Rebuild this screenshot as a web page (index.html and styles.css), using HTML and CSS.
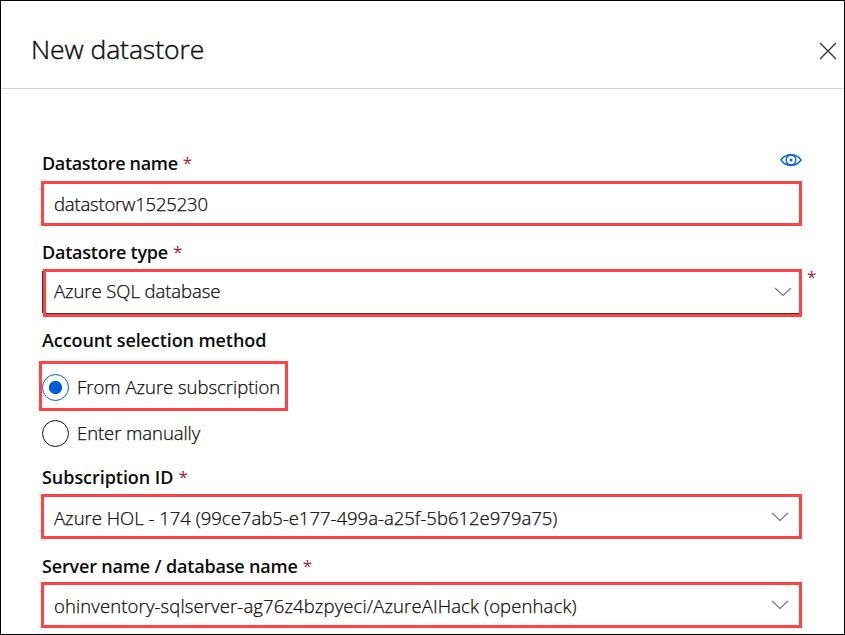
FILE: index.html
```html
<!DOCTYPE html>
<html lang="en">
<head>
<meta charset="utf-8">
<title>New datastore</title>
<link rel="stylesheet" href="styles.css">
</head>
<body>
<main class="panel">
  <header class="header">
    <h1 class="title"><span class="t-title">New datastore</span></h1>
    <svg class="close" width="18" height="18" viewBox="0 0 18 18"><path d="M1 1 17 17M17 1 1 17"/></svg>
  </header>
  <form class="form">
    <div class="label-row first">
      <span class="label l-name">Datastore name</span><span class="star">*</span>
      <svg class="eye" width="22" height="14" viewBox="0 0 22 14"><path d="M1 7C3.500 3.200 7 1.800 11 1.800S18.500 3.200 21 7C18.500 10.800 15 12.200 11 12.200S3.500 10.800 1 7Z"/><circle cx="11" cy="7" r="4.900"/><circle class="pupil" cx="11" cy="7" r="1.500"/></svg>
    </div>
    <div class="field name"><span class="v-name">datastorw1525230</span></div>
    <div class="label-row second"><span class="label l-type">Datastore type</span><span class="star">*</span></div>
    <div class="type-row">
      <div class="field type"><span class="v-type">Azure SQL database</span><svg class="chevron" width="18" height="10" viewBox="0 0 18 10"><path d="M1 1 9 8.500 17 1"/></svg></div>
      <span class="star outer">*</span>
    </div>
    <div class="label-row third"><span class="label l-method">Account selection method</span></div>
    <div class="radio selected"><span class="circle"></span><span class="v-from">From Azure subscription</span></div>
    <div class="radio manual"><span class="circle"></span><span class="v-enter">Enter manually</span></div>
    <div class="label-row fourth"><span class="label l-sub">Subscription ID</span><span class="star">*</span></div>
    <div class="field sub"><span class="v-sub">Azure HOL - 174 (99ce7ab5-e177-499a-a25f-5b612e979a75)</span><svg class="chevron" width="18" height="10" viewBox="0 0 18 10"><path d="M1 1 9 8.500 17 1"/></svg></div>
    <div class="label-row fifth"><span class="label l-server">Server name / database name</span><span class="star">*</span></div>
    <div class="field server"><span class="v-server">ohinventory-sqlserver-ag76z4bzpyeci/AzureAIHack (openhack)</span><svg class="chevron" width="18" height="10" viewBox="0 0 18 10"><path d="M1 1 9 8.500 17 1"/></svg></div>
  </form>
</main>
</body>
</html>
```
FILE: styles.css
```css
* { box-sizing: border-box; }
body { margin: 0; background: #fff; color: #0c0c0c; font: 350 18.500px/26px "Open Sans", "Noto Sans", sans-serif; white-space: nowrap; -webkit-text-stroke: 0.250px; }
.panel { width: 845px; height: 635px; border: 1px solid #000; overflow: hidden; }
.header { display: flex; justify-content: space-between; height: 88px; border-bottom: 1px solid #d2d2d2; padding: 28px 7px 0 30px; }
.title { margin: 0; font-size: 26.500px; font-weight: 350; line-height: 40px; letter-spacing: -0.070px; -webkit-text-stroke: 0.400px; }
.close { margin-top: 13px; }
svg { flex: none; fill: none; }
.close path { stroke: #333; stroke-width: 1.300; }
.form { display: flex; flex-direction: column; padding: 0 42px 0 40px; }
.label-row { display: flex; height: 26px; padding-left: 1px; }
.label { font-weight: 600; font-size: 18px; -webkit-text-stroke: 0; }
.l-name { letter-spacing: -0.330px; }
.l-type { letter-spacing: -0.230px; }
.l-method { letter-spacing: -0.090px; }
.l-sub { letter-spacing: -0.050px; }
.l-server { letter-spacing: -0.170px; }
.v-name { letter-spacing: -0.200px; }
.v-type { letter-spacing: -0.070px; }
.v-from { letter-spacing: -0.020px; }
.v-enter { letter-spacing: -0.070px; }
.v-sub { letter-spacing: 0; }
.v-server { letter-spacing: 0.120px; }
.star { color: #a4262c; font-size: 17px; font-weight: 400; margin-left: 5px; -webkit-text-stroke: 0; }
.first { margin-top: 61px; }
.eye { margin: 3px 0 0 auto; stroke: #0b62d8; stroke-width: 1.400; }
.pupil { fill: #0b62d8; stroke: none; }
.field { display: flex; align-items: center; border: 3px solid #ff4343; padding-left: 10px; flex: none; }
.name { height: 45px; margin-top: 5px; }
.second { margin-top: 13px; }
.type-row { display: flex; margin: 4px -20px 0 1px; padding-right: 21px; }
.type { position: relative; flex: 1; height: 48px; margin-left: 1px; padding: 0 0 4px 8px; box-shadow: inset 0 -1px #333; }
.type::before { content: ""; position: absolute; left: -4px; top: -1px; width: 1px; height: 42px; background: #333; }
.outer { width: 14px; margin: -5px -20px 0 5px; }
.chevron { margin: 0 10px 0 auto; stroke: #777; stroke-width: 1.200; }
.type .chevron { margin: 1px 7px 0 auto; }
.third { margin-top: 10px; }
.radio { display: flex; align-items: center; }
.circle { width: 27px; height: 27px; border: 1px solid #111; border-radius: 50%; margin-right: 8px; flex: none; }
.selected { width: 249px; height: 50px; margin: 8px 0 0 -2px; border: 3px solid #ff4343; padding: 2px 0 0; }
.selected .circle { border: 1.500px solid #005bda; background: radial-gradient(circle, #005bda 6.200px, transparent 7px); }
.manual { height: 27px; margin: 9px 0 0 1px; }
.manual > :last-child { margin-top: -2px; }
.fourth { margin-top: 17px; }
.sub { height: 45px; margin-top: 4px; }
.fifth { margin-top: 14px; }
.server { height: 46px; margin-top: 3px; }
.v-sub, .v-server { margin-top: 2px; }
```
